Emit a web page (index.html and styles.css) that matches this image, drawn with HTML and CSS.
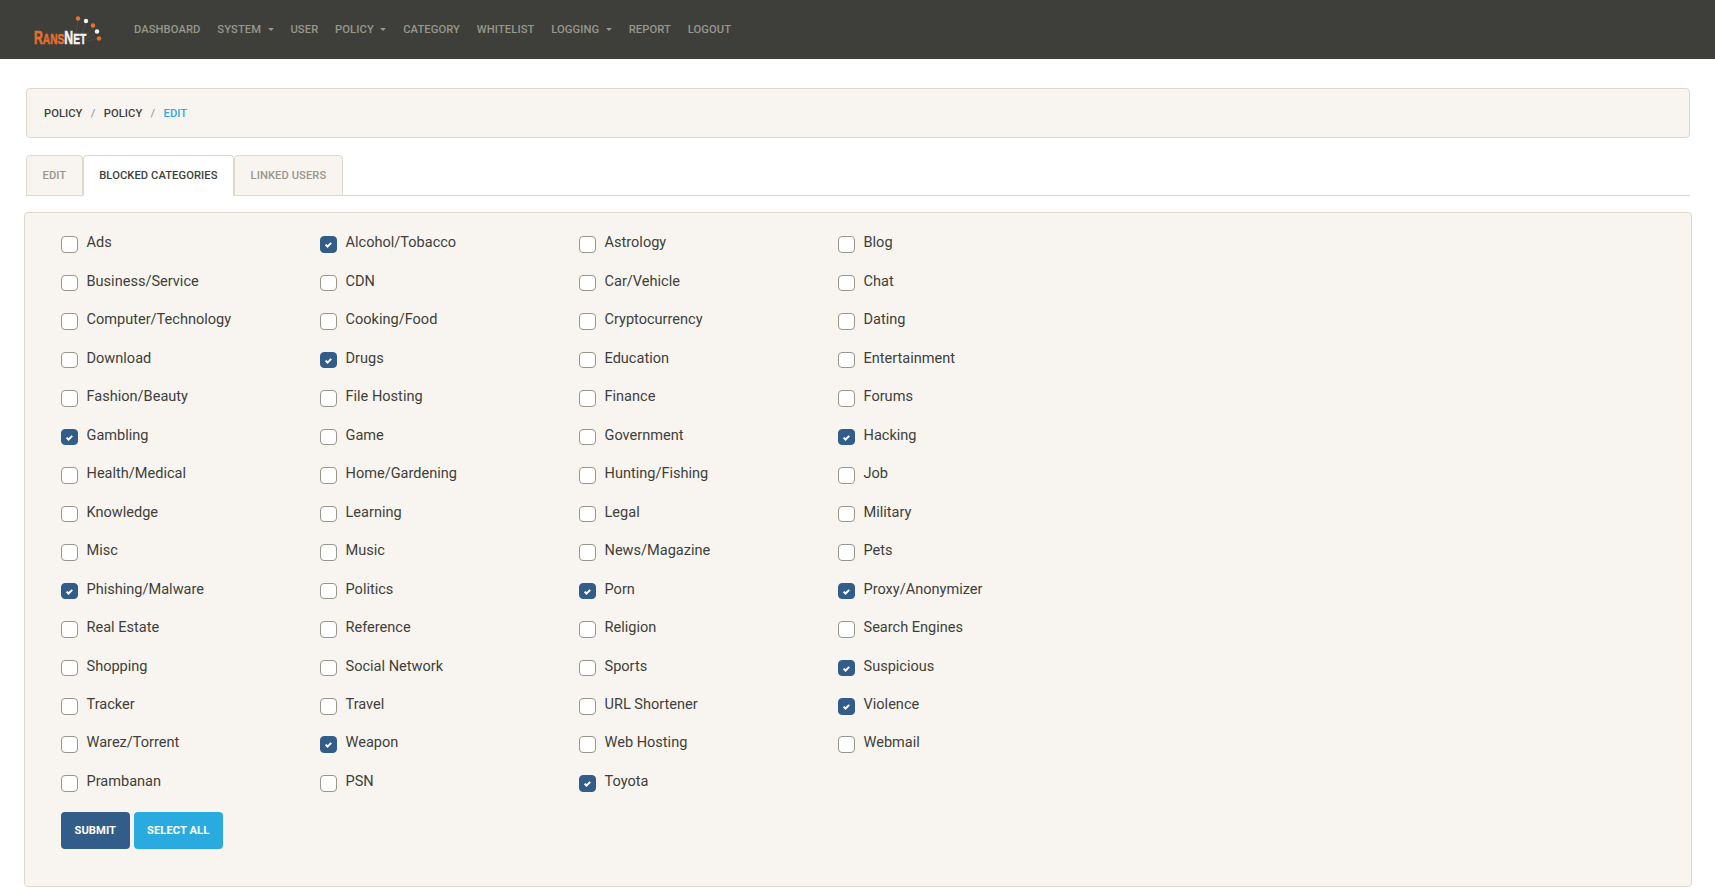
FILE: index.html
```html
<!DOCTYPE html>
<html lang="en">
<head>
<meta charset="utf-8">
<title>RansNet - Policy</title>
<link rel="stylesheet" href="styles.css">
</head>
<body>
<nav class="navbar">
  <a class="logo" href="#">
    <svg width="78" height="36" viewBox="0 0 78 36">
      <g class="rays">
        <path d="M44 27L46 6M48 27L55 8M51 27L63 13M53 28L67 19M55 29L68 26"/>
      </g>
      <circle cx="46" cy="6.5" r="2.2" fill="#e8702a"/>
      <circle cx="54" cy="9" r="2.2" fill="#f2f2f2"/>
      <circle cx="61" cy="13.5" r="2.2" fill="#e8702a"/>
      <circle cx="65" cy="19.5" r="2.2" fill="#f2f2f2"/>
      <circle cx="67" cy="26.5" r="2.2" fill="#e8702a"/>
      <text class="logo-text" transform="translate(2 31.5) scale(.68 1)"><tspan class="logo-o">R<tspan class="logo-s">ANS</tspan></tspan><tspan class="logo-w">N<tspan class="logo-s">ET</tspan></tspan></text>
    </svg>
  </a>
  <ul class="nav">
    <li><a href="#">Dashboard</a></li>
    <li><a href="#" class="drop">System</a></li>
    <li><a href="#">User</a></li>
    <li><a href="#" class="drop">Policy</a></li>
    <li><a href="#">Category</a></li>
    <li><a href="#">Whitelist</a></li>
    <li><a href="#" class="drop">Logging</a></li>
    <li><a href="#">Report</a></li>
    <li><a href="#">Logout</a></li>
  </ul>
</nav>
<main class="page">
  <ol class="breadcrumb">
    <li><a href="#">Policy</a></li>
    <li class="sep">/</li>
    <li><a href="#">Policy</a></li>
    <li class="sep">/</li>
    <li class="current">Edit</li>
  </ol>
  <ul class="tabs">
    <li class="tab">Edit</li>
    <li class="tab active">Blocked Categories</li>
    <li class="tab">Linked Users</li>
  </ul>
  <form class="card">
    <div class="grid">
      <label class="check"><input type="checkbox"><span>Ads</span></label>
      <label class="check"><input type="checkbox" checked><span>Alcohol/Tobacco</span></label>
      <label class="check"><input type="checkbox"><span>Astrology</span></label>
      <label class="check"><input type="checkbox"><span>Blog</span></label>
      <label class="check"><input type="checkbox"><span>Business/Service</span></label>
      <label class="check"><input type="checkbox"><span>CDN</span></label>
      <label class="check"><input type="checkbox"><span>Car/Vehicle</span></label>
      <label class="check"><input type="checkbox"><span>Chat</span></label>
      <label class="check"><input type="checkbox"><span>Computer/Technology</span></label>
      <label class="check"><input type="checkbox"><span>Cooking/Food</span></label>
      <label class="check"><input type="checkbox"><span>Cryptocurrency</span></label>
      <label class="check"><input type="checkbox"><span>Dating</span></label>
      <label class="check"><input type="checkbox"><span>Download</span></label>
      <label class="check"><input type="checkbox" checked><span>Drugs</span></label>
      <label class="check"><input type="checkbox"><span>Education</span></label>
      <label class="check"><input type="checkbox"><span>Entertainment</span></label>
      <label class="check"><input type="checkbox"><span>Fashion/Beauty</span></label>
      <label class="check"><input type="checkbox"><span>File Hosting</span></label>
      <label class="check"><input type="checkbox"><span>Finance</span></label>
      <label class="check"><input type="checkbox"><span>Forums</span></label>
      <label class="check"><input type="checkbox" checked><span>Gambling</span></label>
      <label class="check"><input type="checkbox"><span>Game</span></label>
      <label class="check"><input type="checkbox"><span>Government</span></label>
      <label class="check"><input type="checkbox" checked><span>Hacking</span></label>
      <label class="check"><input type="checkbox"><span>Health/Medical</span></label>
      <label class="check"><input type="checkbox"><span>Home/Gardening</span></label>
      <label class="check"><input type="checkbox"><span>Hunting/Fishing</span></label>
      <label class="check"><input type="checkbox"><span>Job</span></label>
      <label class="check"><input type="checkbox"><span>Knowledge</span></label>
      <label class="check"><input type="checkbox"><span>Learning</span></label>
      <label class="check"><input type="checkbox"><span>Legal</span></label>
      <label class="check"><input type="checkbox"><span>Military</span></label>
      <label class="check"><input type="checkbox"><span>Misc</span></label>
      <label class="check"><input type="checkbox"><span>Music</span></label>
      <label class="check"><input type="checkbox"><span>News/Magazine</span></label>
      <label class="check"><input type="checkbox"><span>Pets</span></label>
      <label class="check"><input type="checkbox" checked><span>Phishing/Malware</span></label>
      <label class="check"><input type="checkbox"><span>Politics</span></label>
      <label class="check"><input type="checkbox" checked><span>Porn</span></label>
      <label class="check"><input type="checkbox" checked><span>Proxy/Anonymizer</span></label>
      <label class="check"><input type="checkbox"><span>Real Estate</span></label>
      <label class="check"><input type="checkbox"><span>Reference</span></label>
      <label class="check"><input type="checkbox"><span>Religion</span></label>
      <label class="check"><input type="checkbox"><span>Search Engines</span></label>
      <label class="check"><input type="checkbox"><span>Shopping</span></label>
      <label class="check"><input type="checkbox"><span>Social Network</span></label>
      <label class="check"><input type="checkbox"><span>Sports</span></label>
      <label class="check"><input type="checkbox" checked><span>Suspicious</span></label>
      <label class="check"><input type="checkbox"><span>Tracker</span></label>
      <label class="check"><input type="checkbox"><span>Travel</span></label>
      <label class="check"><input type="checkbox"><span>URL Shortener</span></label>
      <label class="check"><input type="checkbox" checked><span>Violence</span></label>
      <label class="check"><input type="checkbox"><span>Warez/Torrent</span></label>
      <label class="check"><input type="checkbox" checked><span>Weapon</span></label>
      <label class="check"><input type="checkbox"><span>Web Hosting</span></label>
      <label class="check"><input type="checkbox"><span>Webmail</span></label>
      <label class="check"><input type="checkbox"><span>Prambanan</span></label>
      <label class="check"><input type="checkbox"><span>PSN</span></label>
      <label class="check"><input type="checkbox" checked><span>Toyota</span></label>
    </div>
    <div class="actions">
      <button type="button" class="btn primary">Submit</button>
      <button type="button" class="btn info">Select All</button>
    </div>
  </form>
</main>
</body>
</html>
```

FILE: styles.css
```css
* { box-sizing: border-box; }

html, body { height: 100%; }

body {
  margin: 0;
  background: #fff;
  color: #3e3f3a;
  font-family: Roboto, "Liberation Sans", sans-serif;
  font-size: 14.56px;
  overflow: hidden;
}

a { text-decoration: none; color: inherit; }

.navbar {
  display: flex;
  align-items: center;
  height: 59px;
  background: #3e3f3a;
  padding-left: 32px;
}

.logo { display: block; height: 36px; width: 93.5px; }

.rays path { stroke: #8b8b85; stroke-width: .3; fill: none; opacity: .6; }

.logo-text {
  font-family: "Liberation Sans", sans-serif;
  font-weight: 700;
  font-size: 18px;
  stroke-width: .5px;
}
.logo-o { fill: #e8702a; stroke: #e8702a; }
.logo-w { fill: #f4f4f4; stroke: #f4f4f4; }
.logo-s { font-size: 15px; }

.nav {
  display: flex;
  list-style: none;
  margin: 0;
  padding: 0;
}

.nav a {
  display: block;
  padding: 8px 8.4px;
  font-size: 11.2px;
  font-weight: 500;
  line-height: 16px;
  letter-spacing: .1px;
  text-transform: uppercase;
  color: #98978b;
}

.drop::after {
  content: "";
  display: inline-block;
  margin-left: 6.5px;
  vertical-align: 2px;
  border-top: 3.5px solid #98978b;
  border-left: 3.5px solid transparent;
  border-right: 3.5px solid transparent;
}

.page { padding: 29px 25px 0 26px; }

.breadcrumb {
  display: flex;
  align-items: center;
  gap: 8.3px;
  height: 50px;
  margin: 0;
  padding: 0 17px;
  list-style: none;
  background: #f8f5f0;
  border: 1px solid #dfd7ca;
  border-radius: 4px;
  font-size: 11.2px;
  font-weight: 500;
  letter-spacing: .05px;
  text-transform: uppercase;
  color: #3e3f3a;
}
.breadcrumb .sep { color: #8e8c84; font-weight: 400; }
.breadcrumb .current { color: #29abe0; }

.tabs {
  display: flex;
  height: 41px;
  margin: 17px 0 0;
  padding: 0;
  list-style: none;
  border-bottom: 1px solid #dfd7ca;
}

.tab {
  display: flex;
  align-items: center;
  height: 41px;
  padding: 0 15.5px;
  background: #f8f5f0;
  border: 1px solid #dfd7ca;
  border-radius: 4px 4px 0 0;
  font-size: 11.2px;
  font-weight: 500;
  letter-spacing: .07px;
  text-transform: uppercase;
  color: #98978b;
}

.tab.active {
  background: #fff;
  border-bottom-color: #fff;
  color: #3e3f3a;
}

.card {
  height: 675px;
  margin: 16px -2px 0 -2px;
  padding: 18.2px 36px 0;
  background: #f8f5f0;
  border: 1px solid #dfd7ca;
  border-radius: 4px;
}

.grid {
  display: grid;
  grid-template-columns: repeat(4, 259px);
  grid-auto-rows: 38.49px;
}

.check {
  display: flex;
  align-items: flex-start;
  gap: 8.5px;
  line-height: 22px;
}

.check input {
  appearance: none;
  flex: none;
  width: 17px;
  height: 16.6px;
  margin: 5px 0 0;
  background: #fff;
  border: 1px solid #98978b;
  border-radius: 4px;
}

.check input:checked {
  background-color: #325d88;
  background-image: url("data:image/svg+xml,%3Csvg xmlns='http://www.w3.org/2000/svg' viewBox='0 0 17 17'%3E%3Cpath d='M5.2 8.6l2.2 2.2 4.2-4.2' fill='none' stroke='%23fff' stroke-width='2.2'/%3E%3C/svg%3E");
  border-color: #325d88;
}

.actions {
  display: flex;
  gap: 4px;
  margin-top: 3.4px;
}

.btn {
  height: 37px;
  padding: 0 13.5px;
  border: 0;
  border-radius: 4px;
  color: #fff;
  font-family: inherit;
  font-size: 11.2px;
  font-weight: 700;
  letter-spacing: .05px;
  text-transform: uppercase;
}
.btn.primary { background: #325d88; }
.btn.info { background: #29abe0; }
```
